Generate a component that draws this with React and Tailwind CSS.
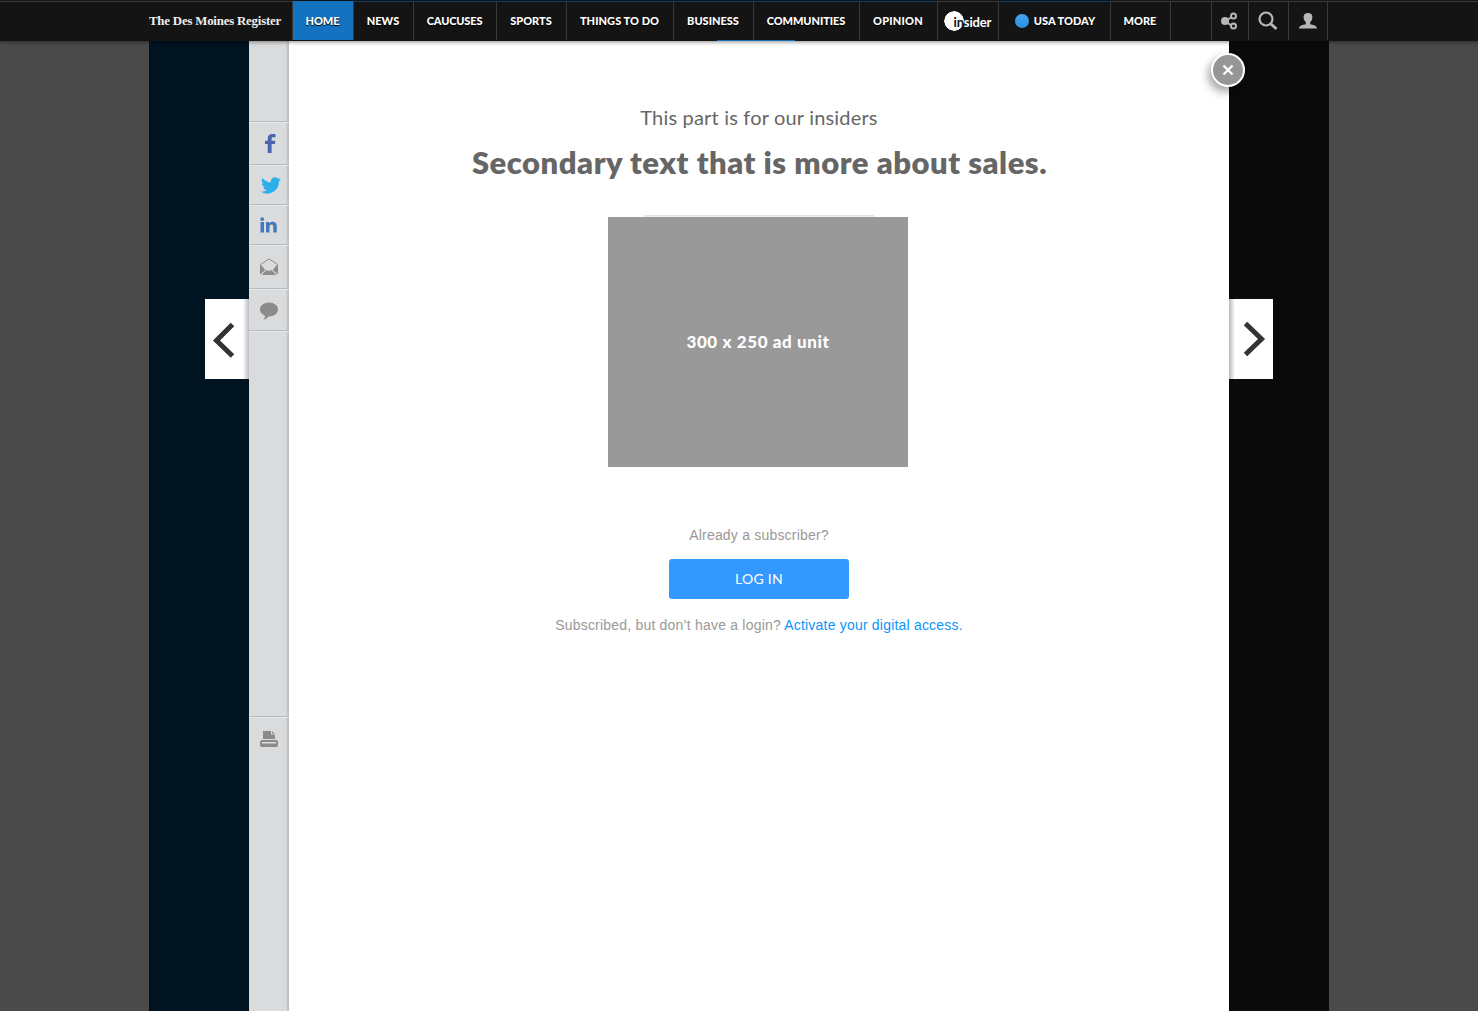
const navItems = [
  { label: 'HOME', cell: 'w-[61px] border-t-[#1473c0] bg-[#1473c0]', text: 'tracking-[-0.1px]' },
  { label: 'NEWS', cell: 'w-[60px] border-t-[#0d3d6b]', text: 'tracking-[0px]' },
  { label: 'CAUCUSES', cell: 'w-[83px] border-t-[#0d3d6b]', text: 'tracking-[-0.15px]' },
  { label: 'SPORTS', cell: 'w-[70px] border-t-[#0d3d6b]', text: 'tracking-[0px]' },
  { label: 'THINGS TO DO', cell: 'w-[107px] border-t-[#0d3d6b]', text: 'tracking-[0.05px]' },
  { label: 'BUSINESS', cell: 'w-[80px] border-t-[#0d3d6b]', text: 'tracking-[0px]' },
  { label: 'COMMUNITIES', cell: 'w-[106px] border-t-[#0d3d6b]', text: 'tracking-[-0.07px]' },
  { label: 'OPINION', cell: 'w-[78px] border-t-[#0d3d6b]', text: 'tracking-[0.2px]' },
];

const cellBase =
  'h-[39px] shrink-0 border-l border-t border-l-[#383838] flex items-center justify-center';

function Header() {
  return (
    <header className="relative z-20 flex h-[41px] w-full bg-[#141414] pt-px shadow-[0_1px_4px_rgba(0,0,0,0.45)]">
      <div className="h-[39px] w-[149px] shrink-0 border-t border-[#383838]" />
      <div className="flex h-[39px] w-[143px] shrink-0 items-center border-t border-[#383838]">
        <span className="origin-left scale-x-[0.95] whitespace-nowrap font-['Liberation_Serif',serif] text-[13.5px] font-bold leading-none tracking-[-0.2px] text-[#eeeeee]">
          The Des Moines Register
        </span>
      </div>
      <nav className="flex whitespace-nowrap font-['Lato',sans-serif] text-[11px] font-black text-white [text-shadow:0_1px_1px_#000]">
        {navItems.map((item) => (
          <a key={item.label} className={`${cellBase} pr-px ${item.cell}`}>
            <span className={item.text}>{item.label}</span>
          </a>
        ))}
        <a className={`${cellBase} w-[61px] border-t-[#383838]`}>
          <span className="flex h-5 w-[49px] items-center rounded-full bg-[radial-gradient(circle_at_10px_10px,white_9.5px,transparent_10px)] pl-[10px] pt-[2px] text-[13px] font-bold leading-none tracking-[-0.15px] [text-shadow:none]">
            <span className="text-[#141414]">in</span>
            <span>sider</span>
          </span>
        </a>
        <a className={`${cellBase} w-[112px] gap-[5px] border-t-[#0d3d6b] pl-px`}>
          <span className="size-[14px] rounded-full bg-linear-to-b from-[#48a5ef] to-[#2490e5]" />
          <span className="tracking-[0px]">USA TODAY</span>
        </a>
        <a className={`${cellBase} w-[60px] border-t-[#383838] pr-px`}>MORE</a>
        <div className={`${cellBase} w-[41px] border-t-[#383838]`} />
      </nav>
      <div className={`${cellBase} w-[37px] border-t-[#383838] pr-[2px]`}>
        <svg width="18" height="18" viewBox="0 0 18 18" fill="none" stroke="#b7b7b7" strokeWidth="2">
          <path d="M12 5 5 9l7 5" />
          <circle cx="5" cy="9" r="3" fill="#b7b7b7" />
          <circle cx="13.5" cy="4" r="2.5" fill="#141414" />
          <circle cx="13.5" cy="14" r="2.5" fill="#141414" />
        </svg>
      </div>
      <div className={`${cellBase} w-10 border-t-[#383838] pr-[2px]`}>
        <svg width="20" height="20" viewBox="0 0 20 20" fill="none" stroke="#b7b7b7">
          <circle cx="8" cy="8" r="6.5" strokeWidth="2.2" />
          <path d="m13 13 5.500 5" strokeWidth="3" />
        </svg>
      </div>
      <div className={`${cellBase} w-[39px] border-t-[#383838]`}>
        <svg width="18" height="16" viewBox="0 0 18 16" fill="#b7b7b7">
          <path d="M9 0C6 0 4.400 1.700 4.600 4.500c.1 2.200 1 3.500 2.200 4.500v2.300C4 12 0 12.400 0 15.600h18c0-3.200-4-3.600-6.800-4.300V9c1.200-1 2.100-2.300 2.200-4.500C13.600 1.700 12 0 9 0Z" />
        </svg>
      </div>
      <div className="h-[39px] flex-1 border-l border-t border-[#383838]" />
      <div className="absolute left-[717px] top-10 h-px w-[78px] bg-[#1473c0]" />
    </header>
  );
}

const shareCell =
  'flex shrink-0 items-center justify-center border-t border-[#b9babc] shadow-[inset_0_1px_0_#e6e7e9]';

function ShareRail() {
  return (
    <aside className="flex w-10 shrink-0 flex-col bg-[#dadbdd] bg-[linear-gradient(to_right,transparent_37px,#c6c7c9_38px,#bcbdbf_40px)] pt-[80px]">
      <a className={`${shareCell} h-[43px] pl-[2px] pt-px`}>
        <svg width="11" height="19" viewBox="0 0 11 19" fill="#4965ad">
          <path d="M2.700 19v-9H0V6.700h2.700V4.600C2.700 1.500 4.300 0 7.400 0H10.500v3.300H8.400C7 3.300 6.600 3.800 6.600 5v1.700h3.700L9.900 10H6.600v9Z" />
        </svg>
      </a>
      <a className={`${shareCell} h-10 pl-[3px] pt-px`}>
        <svg width="20" height="17" viewBox="0 0 24 20" fill="#2cb0e9">
          <path d="M24 2.600c-.9.400-1.800.7-2.800.8a4.900 4.900 0 0 0 2.200-2.700c-1 .6-2 1-3.100 1.200a4.900 4.900 0 0 0-8.400 4.500C7.700 6.200 4.100 4.200 1.700 1.100a4.900 4.900 0 0 0 1.500 6.600C2.400 7.600 1.600 7.400 1 7v.1c0 2.400 1.700 4.400 3.900 4.800-.7.200-1.500.2-2.200.1.600 2 2.400 3.400 4.600 3.400A9.900 9.900 0 0 1 0 17.500 14 14 0 0 0 21.500 5.100c1-.7 1.800-1.600 2.500-2.500Z" />
        </svg>
      </a>
      <a className={`${shareCell} h-10 pr-px`}>
        <svg width="17" height="16" viewBox="0 0 17 16" fill="#4578b8">
          <path d="M.5 5h3.500v10.500H.5ZM6 5h3.300v1.400c.8-1.100 1.800-1.700 3.300-1.700 2.800 0 4.200 1.500 4.200 4.600v6.200h-3.500V10c0-1.600-.5-2.400-1.800-2.400-1.400 0-2 1-2 2.500v5.400H6Z" />
          <circle cx="2.200" cy="2.100" r="1.900" />
        </svg>
      </a>
      <a className={`${shareCell} h-11`}>
        <svg width="18" height="17" viewBox="0 0 18 17" fill="#8b8b8b">
          <path d="M.5 8V6.500L9 .8l8.500 5.700V8M3.500 10.500 1 7.200M14.500 10.500 17 7.200" fill="none" stroke="#8b8b8b" />
          <path d="m0 7 5.500 5L0 16.500ZM18 7l-5.500 5 5.500 4.500ZM1.500 17l5.200-5L9 13.300l2.300-1.300 5.200 5Z" />
        </svg>
      </a>
      <a className={`${shareCell} h-[42px] pt-[2px]`}>
        <svg width="18" height="18" viewBox="0 0 18 18" fill="#8b8b8b">
          <path d="M9 .5c5 0 9 3 9 7s-4 7-9 7h-.6C7.500 16 6 17.300 3.500 17.600c1-1 1.500-2.300 1.400-3.900C2 12.500 0 10.200 0 7.500c0-4 4-7 9-7Z" />
        </svg>
      </a>
      <div className={`${shareCell} h-[386px]`} />
      <a className={`${shareCell} h-[45px]`}>
        <svg width="18" height="16" viewBox="0 0 18 16" fill="#8b8b8b">
          <path d="M3 0h8v3.500h4V8H3Z" />
          <path d="M12 0v2.600h2.700Z" />
          <path d="M1.500 9H16.500L18 10.500V14.500L17 16H1L0 14.500V10.500ZM2 11v1.500h14V11Z" fillRule="evenodd" />
        </svg>
      </a>
    </aside>
  );
}

function Insiders() {
  return (
    <section className="relative flex w-[940px] shrink-0 flex-col items-center bg-white">
      <h2 className="mt-[62px] whitespace-nowrap font-['Lato',sans-serif] text-[20px] leading-7 tracking-[0.18px] text-[#666666]">
        This part is for our insiders
      </h2>
      <h1 className="mt-[11px] whitespace-nowrap pl-px font-['Lato',sans-serif] text-[31px] font-extrabold leading-10 tracking-[0.5px] text-[#666666]">
        Secondary text that is more about sales.
      </h1>
      <div className="mt-[33px] h-[2px] w-[230px] border border-b-0 border-[#e3e3e3] bg-[#efefef]" />
      <div className="mr-[3px] flex h-[250px] w-[300px] items-center justify-center bg-[#999999] pl-px font-['Lato',sans-serif] text-[17px] font-black tracking-[0.6px] text-white">
        300 x 250 ad unit
      </div>
      <p className="mt-[58px] whitespace-nowrap font-['Liberation_Sans',sans-serif] text-[14px] leading-5 tracking-[0.2px] text-[#999999]">
        Already a subscriber?
      </p>
      <button className="mt-[14px] h-10 w-[180px] rounded-[3px] bg-[#3399ff] pb-px font-['Lato',sans-serif] text-[14px] tracking-[0.3px] text-white">
        LOG IN
      </button>
      <p className="mt-4 whitespace-nowrap font-['Liberation_Sans',sans-serif] text-[14px] leading-5 tracking-[0.2px] text-[#999999]">
        Subscribed, but don’t have a login? <a className="text-[#0d94fb]">Activate your digital access.</a>
      </p>
      <button className="absolute right-[-16px] top-3 flex size-[34px] items-center justify-center rounded-full border-2 border-white bg-[#969696] shadow-[-3px_5px_9px_rgba(0,0,0,0.35)]">
        <svg width="12" height="12" viewBox="0 0 12 12" stroke="white" strokeWidth="2.3">
          <path d="m1.500 1.500 9 9m0-9-9 9" />
        </svg>
      </button>
    </section>
  );
}

export default function App() {
  return (
    <div className="flex h-[1011px] w-[1478px] flex-col overflow-hidden bg-[#4a4a4a]">
      <Header />
      <main className="flex flex-1 pl-[149px]">
        <div className="flex w-[100px] shrink-0 justify-end bg-[#001321] pt-[258px]">
          <button className="h-20 w-11 bg-white bg-[linear-gradient(to_right,transparent_38px,#b8bcc0_44px)] pl-[7px] pt-px">
            <svg width="24" height="36" viewBox="0 0 24 36" fill="none" stroke="#333333" strokeWidth="5">
              <path d="M20.500 2.500 4.500 18.500l16 15.500" />
            </svg>
          </button>
        </div>
        <ShareRail />
        <Insiders />
        <div className="w-[100px] shrink-0 bg-[#0a0a0a] pt-[258px]">
          <button className="flex h-20 w-11 items-center bg-white bg-[linear-gradient(to_left,transparent_38px,#b8b8b8_44px)] pl-[13px]">
            <svg width="24" height="36" viewBox="0 0 24 36" fill="none" stroke="#333333" strokeWidth="5">
              <path d="m3.500 2.500 16 15.500-16 15.500" />
            </svg>
          </button>
        </div>
      </main>
    </div>
  );
}
